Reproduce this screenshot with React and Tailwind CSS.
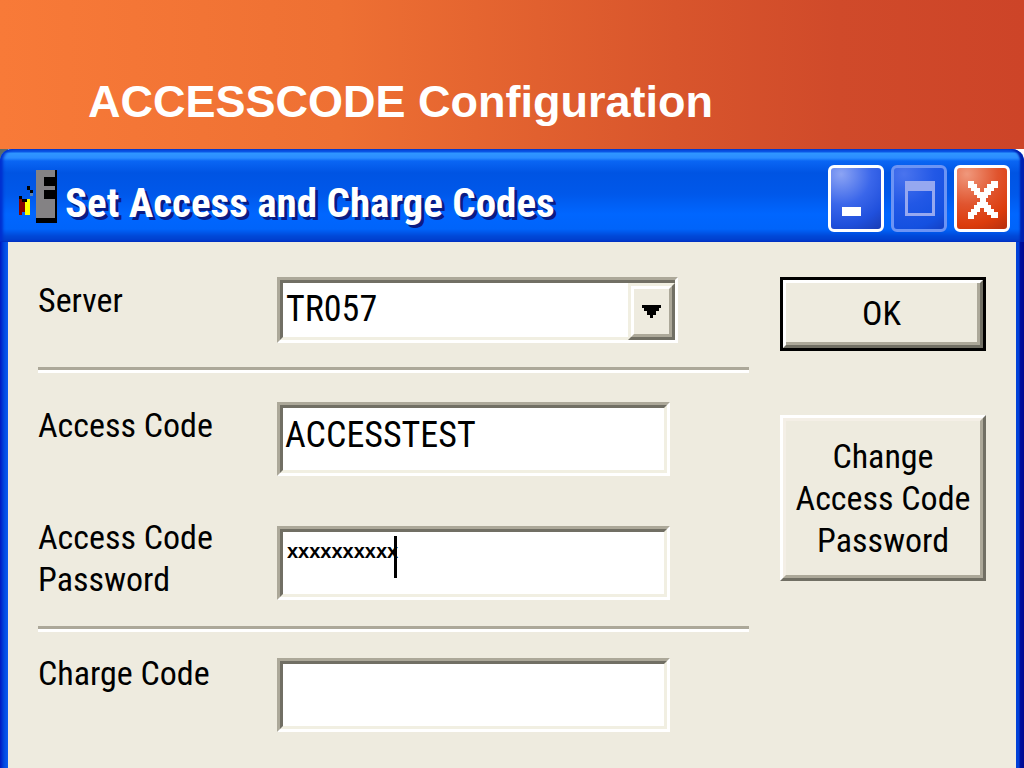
import { useState } from 'react';

const font = "font-['Liberation_Sans_Narrow','Roboto_Condensed','Liberation_Sans',sans-serif]";

const TextField = ({ id, value, onChange, className = 'text-[36px] pb-2 pl-0.5', children }) => (
  <div className="relative border-3 border-t-[#aca899] border-l-[#aca899] border-r-white border-b-white">
    <input
      id={id}
      type="text"
      value={value}
      onChange={e => onChange(e.target.value)}
      className={`block w-full h-[68px] bg-white border-3 border-t-[#716f64] border-l-[#716f64] border-r-[#f1efe2] border-b-[#f1efe2] outline-none ${className}`}
    />
    {children}
  </div>
);

const Divider = () => <hr className="h-1.5 border-0 border-t-3 border-t-[#aca899] bg-white" />;

const AppIcon = () => (
  <svg viewBox="0 0 39 54" className="w-[39px] h-[54px] shrink-0" shapeRendering="crispEdges" aria-hidden="true">
    <path d="M18 1h21v53H18z" fill="#000" />
    <path d="M18 1h19v48H18z" fill="#848284" />
    <path d="M26 8h11v9H26zM26 21h11v9H26z" fill="#000" />
    <path d="M1 30h6v13H4v3H1z" fill="#840000" />
    <path d="M7 30h5v16H7z" fill="#ff0" />
    <path d="M1 27h3v3h5v3H4v-3H1zM9 17h3v4H9zM12 21h3v3h-3z" fill="#000" />
    <path d="M12 24h3v3h-3z" fill="#5a82b4" />
  </svg>
);

const App = () => {
  const [server, setServer] = useState('TR057');
  const [accessCode, setAccessCode] = useState('ACCESSTEST');
  const [password, setPassword] = useState('xxxxxxxxxx');
  const [chargeCode, setChargeCode] = useState('');

  return (
    <div className="min-h-screen flex flex-col bg-white">
      {/* Slide heading */}
      <header className="h-[149px] pl-[88px] pt-[76px] bg-[linear-gradient(to_right,#f87a38,#ee7033_33%,#d8552c_66%,#d04a2a_82%,#cd4428)]">
        <h1 className="text-[45px] leading-[52px] font-bold text-white font-['Liberation_Sans',Arial,sans-serif]">
          ACCESSCODE Configuration
        </h1>
      </header>

      {/* Dialog window */}
      <main className={`flex-1 flex flex-col text-[34px] leading-[42px] text-black bg-[linear-gradient(to_right,#5a6a6c_8px,#ffffff_8px)] ${font}`}>
        <div className="h-[93px] flex items-center pl-[18px] pr-[14px] rounded-t-xl shadow-[inset_-4px_0_2px_#0020b0,inset_3px_0_3px_#0030d0] bg-[linear-gradient(to_bottom,#0a50dc_0px,#0a58e8_3px,#3096ff_4px,#2a8cff_9px,#0a66f4_12px,#0054e3_24px,#0058ea_45px,#0066ff_65px,#0064fa_80px,#0048d8_87px,#003cc8_93px)]">
          <AppIcon />
          <h2 className="flex-1 ml-2 pt-3.5 text-[41px] leading-[48px] font-bold text-white whitespace-nowrap [text-shadow:3px_3px_0_#0a1c84]">
            Set Access and Charge Codes
          </h2>
          <div className="flex gap-[7px] pt-1.5">
            <button aria-label="Minimize" className="w-14 h-[67px] rounded-md border-3 border-white bg-[radial-gradient(circle_at_20%_10%,#8ca4f4,#3a66ea_45%,#2050dc_75%,#1a3cb4)]">
              <svg viewBox="0 0 50 61" className="block w-full" shapeRendering="crispEdges" aria-hidden="true">
                <path d="M11 39h19v9H11z" fill="#fff" />
              </svg>
            </button>
            <button aria-label="Maximize" disabled className="w-14 h-[67px] rounded-md border-3 border-[#6c94f4] bg-[radial-gradient(circle_at_20%_10%,#4a74ee,#2258e6_45%,#1450e0_80%,#1440c4)]">
              <svg viewBox="0 0 50 61" className="block w-full" shapeRendering="crispEdges" aria-hidden="true">
                <path d="M11 13h30v35H11zM14 23v22h24V23z" fill="#96a8f0" fillRule="evenodd" />
              </svg>
            </button>
            <button aria-label="Close" className="w-14 h-[67px] rounded-md border-3 border-white bg-[radial-gradient(circle_at_20%_10%,#f0987c,#e0542e_45%,#dc3c0c_75%,#b43010)]">
              <svg viewBox="0 0 50 61" className="block w-full" shapeRendering="crispEdges" aria-hidden="true">
                <path d="M11 13h6v3h3v4h3v4h4v-4h3v-4h4v-3h7v7h-4v3h-3v4h-3v3h-2v4h2v3h3v4h3v3h4v6h-7v-3h-4v-3h-3v-4h-4v4h-3v3h-3v4h-6v-7h3v-3h3v-4h3v-3h3v-4h-3v-3h-3v-4h-3v-3h-3z" fill="#fff" />
              </svg>
            </button>
          </div>
        </div>

        {/* Window frame */}
        <div className="flex-1 flex px-2 bg-[linear-gradient(to_right,#0018c0_0px,#0048e0_4px,#0a5cf0_8px,#0040d8_calc(100%-8px),#0040d8_calc(100%-5px),#0010a0_calc(100%-4px),#000890)]">
          <div className="flex-1 flex items-start gap-[31px] px-[30px] pt-[35px] pb-9 bg-[#eeebdf]">
            <form className="flex-1">
              <div className="grid grid-cols-[239px_1fr] items-start mb-6">
                <label htmlFor="server" className="pt-0.5">Server</label>
                <div className="relative mr-[71px] border-3 border-t-[#aca899] border-l-[#aca899] border-r-white border-b-white">
                  <select
                    id="server"
                    value={server}
                    onChange={e => setServer(e.target.value)}
                    className="block w-full h-[60px] pl-[3px] pb-0.5 text-[36px] appearance-none bg-white border-3 border-t-[#716f64] border-l-[#716f64] border-r-[#716f64] border-b-[#f1efe2] outline-none"
                  >
                    <option>TR057</option>
                  </select>
                  <span className="absolute right-0 top-[3px] bottom-0 w-[47px] flex pointer-events-none bg-[#eeebdf] border-3 border-t-[#f1efe2] border-l-[#f1efe2] border-r-[#716f64] border-b-[#716f64]">
                    <span className="flex-1 flex items-center justify-center border-3 border-t-white border-l-white border-r-[#aca899] border-b-[#aca899]">
                      <svg viewBox="0 0 19 13" className="w-[19px] h-[13px]" shapeRendering="crispEdges" aria-hidden="true">
                        <path d="M0 0h19v3h-2v3h-3v4h-3v3H8v-3H5V6H2V3H0z" />
                      </svg>
                    </span>
                  </span>
                </div>
              </div>

              <Divider />

              <div className="grid grid-cols-[239px_1fr] items-start mt-[29px]">
                <label htmlFor="access-code" className="pt-0.5">Access Code</label>
                <div className="mr-[79px]">
                  <TextField id="access-code" value={accessCode} onChange={setAccessCode} />
                </div>
              </div>

              <div className="grid grid-cols-[239px_1fr] items-start mt-10 mb-[26px]">
                <label htmlFor="access-password">Access Code<br />Password</label>
                <div className="mr-[79px] pt-[10px]">
                  <TextField
                    id="access-password"
                    value={password}
                    onChange={setPassword}
                    className="text-[20px] font-bold pb-6 pl-1 font-['Liberation_Sans',Arial,sans-serif]"
                  >
                    {/* text caret */}
                    <span className="absolute left-[114px] top-[7px] w-[3px] h-[42px] bg-black" />
                  </TextField>
                </div>
              </div>

              <Divider />

              <div className="grid grid-cols-[239px_1fr] items-start mt-5">
                <label htmlFor="charge-code">Charge Code</label>
                <div className="mr-[79px] pt-1.5">
                  <TextField id="charge-code" value={chargeCode} onChange={setChargeCode} />
                </div>
              </div>
            </form>

            <div className="w-[206px] flex flex-col gap-16">
              <button className="h-[74px] border-3 border-black">
                <span className="h-full flex border-3 border-t-white border-l-white border-r-[#716f64] border-b-[#716f64]">
                  <span className="flex-1 flex items-center justify-center border-r-3 border-b-3 border-[#aca899]">OK</span>
                </span>
              </button>
              <button className="h-[166px] border-3 border-t-white border-l-white border-r-[#716f64] border-b-[#716f64]">
                <span className="h-full flex items-center justify-center border-3 border-t-[#f4efe6] border-l-[#f4efe6] border-r-[#aca899] border-b-[#aca899]">
                  Change<br />Access Code<br />Password
                </span>
              </button>
            </div>
          </div>
        </div>
      </main>
    </div>
  );
};

export default App;
